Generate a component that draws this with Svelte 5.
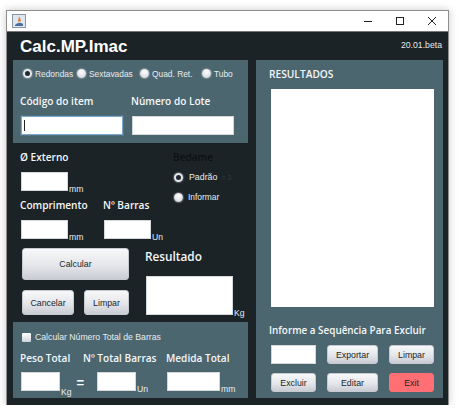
<script>
  const shapes = [
    { label: 'Redondas', checked: true, width: 54 },
    { label: 'Sextavadas', width: 63 },
    { label: 'Quad. Ret.', width: 62 },
    { label: 'Tubo' }
  ]
</script>

<div class="window">
  <div class="titlebar">
    <svg class="app-icon" width="14" height="14" viewBox="0 0 14 14">
      <rect x="0.5" y="0.5" width="13" height="13" fill="#dfe6ee" stroke="#8a97a8" />
      <path d="M7 2 L9 7 L6 8 Z" fill="#d9772b" />
      <path d="M3 11 Q7 7 11 10 L11 12 L3 12 Z" fill="#4a6f9c" />
    </svg>
    <div class="controls">
      <svg width="10" height="10" viewBox="0 0 10 10"><path d="M1 5.5 H9" stroke="#222" /></svg>
      <svg width="10" height="10" viewBox="0 0 10 10"><rect x="1.5" y="1.5" width="7" height="7" fill="none" stroke="#222" /></svg>
      <svg width="10" height="10" viewBox="0 0 10 10"><path d="M1 1 L9 9 M9 1 L1 9" stroke="#222" /></svg>
    </div>
  </div>

  <div class="content">
    <div class="header">
      <h1>Calc.MP.Imac</h1>
      <span class="version">20.01.beta</span>
    </div>

    <div class="columns">
      <div class="left">
        <section class="panel top">
          <div class="radios">
            {#each shapes as s}
              <label class="radio" style:width={s.width ? s.width + 'px' : null}>
                <span class="dot" class:checked={s.checked}></span>{s.label}
              </label>
            {/each}
          </div>
          <div class="lot">
            <div>
              <div class="cap">Código do item</div>
              <div class="input focus"><span class="caret"></span></div>
            </div>
            <div>
              <div class="cap">Número do Lote</div>
              <div class="input lote"></div>
            </div>
          </div>
        </section>

        <div class="calc">
          <div class="calc-row first">
            <div class="col-a">
              <div class="cap">Ø Externo</div>
              <div class="field"><div class="input small"></div><span class="unit">mm</span></div>
            </div>
            <div class="bedame">
              <div class="cap dark">Bedame</div>
              <label class="radio padrao"><span class="dot checked"></span>Padrão<small>= 3</small></label>
              <label class="radio informar"><span class="dot"></span>Informar</label>
            </div>
          </div>

          <div class="calc-row second">
            <div class="col-a short">
              <div class="cap">Comprimento</div>
              <div class="field"><div class="input small"></div><span class="unit">mm</span></div>
            </div>
            <div>
              <div class="cap">Nº Barras</div>
              <div class="field"><div class="input small"></div><span class="unit">Un</span></div>
            </div>
          </div>

          <div class="calc-row third">
            <div class="actions">
              <button class="btn big">Calcular</button>
              <div class="pair">
                <button class="btn cancel">Cancelar</button>
                <button class="btn clear">Limpar</button>
              </div>
            </div>
            <div class="result">
              <div class="result-title">Resultado</div>
              <div class="field"><div class="input result-box"></div><span class="unit">Kg</span></div>
            </div>
          </div>
        </div>

        <section class="panel bottom">
          <label class="check"><span class="box"></span>Calcular Número Total de Barras</label>
          <div class="totals">
            <div class="total t1">
              <div class="cap">Peso Total</div>
              <div class="field"><div class="input w39"></div><span class="unit low">Kg</span><span class="equals">=</span></div>
            </div>
            <div class="total t2">
              <div class="cap">Nº Total Barras</div>
              <div class="field"><div class="input w39"></div><span class="unit">Un</span></div>
            </div>
            <div class="total">
              <div class="cap">Medida Total</div>
              <div class="field"><div class="input w53"></div><span class="unit">mm</span></div>
            </div>
          </div>
        </section>
      </div>

      <section class="panel right">
        <div class="cap res-title">RESULTADOS</div>
        <div class="list"></div>
        <div class="cap seq">Informe a Sequência Para Excluir</div>
        <div class="row-btns">
          <div class="input seq-input"></div>
          <button class="btn mid">Exportar</button>
          <button class="btn side">Limpar</button>
        </div>
        <div class="row-btns">
          <button class="btn side">Excluir</button>
          <button class="btn mid">Editar</button>
          <button class="btn side exit">Exit</button>
        </div>
      </section>
    </div>
  </div>
</div>

<style>
  :global(body) {
    background: #fff;
  }
  .window {
    box-sizing: border-box;
    width: 443px;
    height: 395px;
    margin: 10px 0 0 6px;
    border: 1px solid #8e8e8e;
    border-bottom: 0;
    background: #1b2327;
    box-shadow: 0 0 8px rgba(0, 0, 0, 0.22);
    font-family: "Liberation Sans", Arial, sans-serif;
    display: flex;
    flex-direction: column;
  }
  .titlebar {
    box-sizing: border-box;
    height: 21px;
    flex: none;
    background: #fff;
    border-bottom: 1px solid #777;
    display: flex;
    align-items: center;
    justify-content: space-between;
    padding-left: 5px;
  }
  .app-icon {
    display: block;
  }
  .controls {
    display: flex;
    gap: 22px;
    padding-right: 11px;
  }
  .controls svg {
    display: block;
  }
  .content {
    padding: 0 5px 7px 6px;
    flex: 1;
    min-height: 0;
    display: flex;
    flex-direction: column;
  }
  .header {
    height: 27px;
    flex: none;
    display: flex;
    justify-content: space-between;
    align-items: center;
    padding: 0 0 1px 7px;
  }
  h1 {
    margin: 0;
    padding-top: 3px;
    color: #fff;
    font-size: 17px;
    font-weight: 700;
  }
  .version {
    color: #e4e8ea;
    font-size: 8.7px;
    padding: 0 1px 2px 0;
  }
  .columns {
    flex: 1;
    display: flex;
    gap: 8px;
  }
  .left {
    width: 235px;
    display: flex;
    flex-direction: column;
  }
  .panel {
    background: #4c6670;
    box-sizing: border-box;
  }
  .cap {
    font-family: "Open Sans", sans-serif;
    font-size: 10.1px;
    font-weight: 600;
    line-height: 15px;
    color: #f4f7f8;
    white-space: nowrap;
  }
  .cap.dark {
    color: #0d1113;
  }
  .top {
    height: 83px;
    padding: 7px 7px 0 7px;
  }
  .radios {
    display: flex;
    height: 13px;
    align-items: center;
    margin-left: 3px;
  }
  .radio {
    display: flex;
    align-items: center;
    gap: 3px;
    font-size: 8.4px;
    color: #e8eced;
    white-space: nowrap;
  }
  .dot {
    box-sizing: border-box;
    width: 9px;
    height: 9px;
    border-radius: 50%;
    background: radial-gradient(circle at 50% 35%, #fff, #c9ced6);
    box-shadow: 0 0 1px 1px rgba(255, 255, 255, 0.25);
    flex: none;
  }
  .dot.checked {
    background: #e4e8ee;
    border: 2px solid #e4e8ee;
  }
  .dot.checked::after {
    content: "";
    display: block;
    width: 5px;
    height: 5px;
    border-radius: 50%;
    background: #1f2a30;
  }
  .lot {
    display: flex;
    gap: 8px;
    margin-top: 14px;
  }
  .lot > div:first-child {
    width: 103px;
  }
  .input {
    box-sizing: border-box;
    background: #fff;
    border: 1px solid #d4d8da;
    height: 19px;
    flex: none;
  }
  .lot .input {
    margin-top: 7px;
    width: 102px;
    margin-left: 1px;
  }
  .input.focus {
    border: 1px solid #7aa6cc;
    padding: 3px 2px;
    box-shadow: 0 0 0 1px #7aa6cc33;
  }
  .caret {
    display: block;
    width: 1px;
    height: 11px;
    background: #222;
  }
  .calc {
    flex: 1;
    padding-left: 7px;
    display: flex;
    flex-direction: column;
  }
  .calc-row {
    display: flex;
  }
  .calc-row.first {
    margin-top: 7px;
    height: 48px;
  }
  .calc-row.second {
    height: 45px;
  }
  .col-a {
    width: 153px;
  }
  .col-a.short {
    width: 83px;
  }
  .field {
    display: flex;
    align-items: flex-end;
    margin-left: 1px;
  }
  .first .field,
  .second .field {
    margin-top: 7px;
  }
  .input.small {
    width: 47px;
  }
  .unit {
    color: #e8eced;
    font-size: 8.6px;
    line-height: 10px;
    margin-left: 1px;
    margin-bottom: -3px;
  }
  .bedame .padrao {
    margin: 7px 0 0 1px;
    gap: 6px;
    font-size: 8.8px;
  }
  .padrao small {
    font-size: 7px;
    color: #2f3c42;
    margin-left: -2px;
  }
  .informar {
    margin: 10px 0 0 1px;
    gap: 5px;
  }
  .third {
    margin-top: 5px;
  }
  .actions {
    width: 107px;
    margin-left: 2px;
    flex: none;
  }
  .btn {
    box-sizing: border-box;
    border: 1px solid #c6cad0;
    border-radius: 3px;
    padding: 0;
    background: linear-gradient(#f7f8f9, #e4e6ea 55%, #c9ccd3);
    font-family: "Liberation Sans", Arial, sans-serif;
    font-size: 8.8px;
    color: #20262a;
    height: 19px;
  }
  .btn.big {
    display: block;
    width: 107px;
    height: 32px;
  }
  .pair {
    display: flex;
    justify-content: space-between;
    margin-top: 10px;
  }
  .btn.cancel {
    width: 52px;
    height: 25px;
  }
  .btn.clear {
    width: 45px;
    height: 25px;
  }
  .result {
    margin-left: 16px;
  }
  .result-title {
    font-family: "Open Sans", sans-serif;
    font-weight: 600;
    font-size: 11.8px;
    line-height: 16px;
    color: #f4f7f8;
  }
  .result .field {
    margin-top: 12px;
  }
  .result-box {
    width: 87px;
    height: 39px;
  }
  .bottom {
    height: 76px;
    padding: 9px 7px 0 7px;
  }
  .check {
    display: flex;
    align-items: center;
    gap: 4px;
    font-size: 8.7px;
    color: #e8eced;
    height: 12px;
    margin-left: 2px;
  }
  .box {
    box-sizing: border-box;
    width: 9px;
    height: 9px;
    background: linear-gradient(#fff, #cfd3da);
    border-radius: 1px;
  }
  .totals {
    display: flex;
    margin-top: 8px;
  }
  .total .field {
    margin-top: 6px;
  }
  .t1 {
    width: 63px;
  }
  .t2 {
    width: 83px;
  }
  .t2 .field {
    margin-left: 14px;
  }
  .input.w39 {
    width: 39px;
  }
  .input.w53 {
    width: 53px;
  }
  .unit.low {
    margin-bottom: -6px;
  }
  .equals {
    color: #fff;
    font-size: 13px;
    font-weight: 700;
    line-height: 13px;
    margin-left: 5px;
    margin-bottom: 2px;
  }
  .right {
    flex: 1;
    padding: 6px 9px 0 13px;
  }
  .res-title {
    font-size: 10.2px;
    line-height: 16px;
  }
  .list {
    background: #fff;
    width: 163px;
    height: 218px;
    margin: 7px 0 0 2px;
  }
  .seq {
    margin-top: 16px;
    font-size: 9.9px;
  }
  .row-btns {
    display: flex;
    justify-content: space-between;
    width: 163px;
    margin: 9px 0 0 2px;
  }
  .seq + .row-btns {
    margin-top: 7px;
  }
  .seq-input,
  .btn.side {
    width: 45px;
  }
  .btn.mid {
    width: 51px;
  }
  .btn.exit {
    background: #ff6f73;
    border-color: #ff6f73;
  }
</style>
